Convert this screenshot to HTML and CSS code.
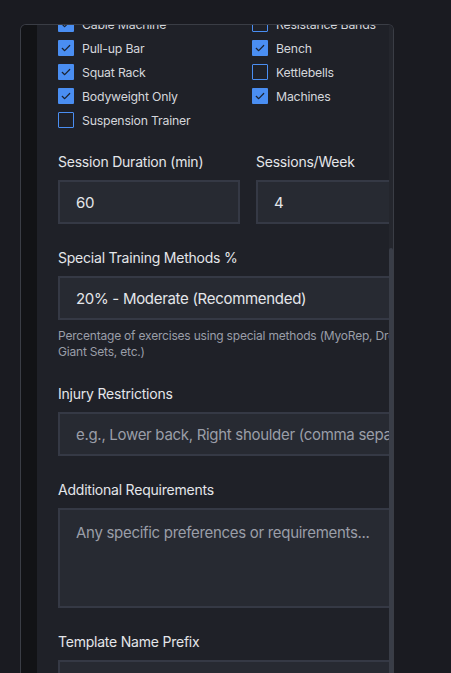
FILE: index.html
```html
<!DOCTYPE html>
<html lang="en">
<head>
<meta charset="utf-8">
<title>Workout Generator Settings</title>
<link rel="stylesheet" href="styles.css">
</head>
<body>
<div class="frame">
  <div class="strip"></div>
  <div class="pane">
    <div class="content">
      <form class="form">
        <div class="checks">
          <label class="check"><span class="box on"><svg viewBox="0 0 16 16"><path d="M4.2 8.3l2.5 2.4 5-5.2"/></svg></span>Cable Machine</label>
          <label class="check"><span class="box"></span>Resistance Bands</label>
          <label class="check"><span class="box on"><svg viewBox="0 0 16 16"><path d="M4.2 8.3l2.5 2.4 5-5.2"/></svg></span>Pull-up Bar</label>
          <label class="check"><span class="box on"><svg viewBox="0 0 16 16"><path d="M4.2 8.3l2.5 2.4 5-5.2"/></svg></span>Bench</label>
          <label class="check"><span class="box on"><svg viewBox="0 0 16 16"><path d="M4.2 8.3l2.5 2.4 5-5.2"/></svg></span>Squat Rack</label>
          <label class="check"><span class="box"></span>Kettlebells</label>
          <label class="check"><span class="box on"><svg viewBox="0 0 16 16"><path d="M4.2 8.3l2.5 2.4 5-5.2"/></svg></span>Bodyweight Only</label>
          <label class="check"><span class="box on"><svg viewBox="0 0 16 16"><path d="M4.2 8.3l2.5 2.4 5-5.2"/></svg></span>Machines</label>
          <label class="check"><span class="box"></span>Suspension Trainer</label>
        </div>

        <div class="pair">
          <div class="field">
            <div class="label">Session Duration (min)</div>
            <input class="input" type="text" value="60">
          </div>
          <div class="field">
            <div class="label">Sessions/Week</div>
            <input class="input" type="text" value="4">
          </div>
        </div>

        <div class="field">
          <div class="label">Special Training Methods %</div>
          <select class="input select">
            <option>20% - Moderate (Recommended)</option>
          </select>
          <p class="help">Percentage of exercises using special methods (MyoRep, Drop Sets, Giant Sets, etc.)</p>
        </div>

        <div class="field">
          <div class="label">Injury Restrictions</div>
          <input class="input" type="text" placeholder="e.g., Lower back, Right shoulder (comma separated)">
        </div>

        <div class="field">
          <div class="label">Additional Requirements</div>
          <textarea class="input area" placeholder="Any specific preferences or requirements..."></textarea>
        </div>

        <div class="field">
          <div class="label">Template Name Prefix</div>
          <input class="input" type="text">
        </div>
      </form>
    </div>
    <div class="scrollbar"><div class="thumb"></div></div>
  </div>
</div>
</body>
</html>
```

FILE: styles.css
```css
html, body {
  margin: 0;
  padding: 0;
}
body {
  background: #1a1b21;
  width: 451px;
  height: 673px;
  overflow: hidden;
  font-family: Inter, "Noto Sans", "Liberation Sans", sans-serif;
}
.frame {
  margin: 24px 0 0 20px;
  width: 372px;
  height: 660px;
  border: 1px solid #3a3d45;
  border-bottom: none;
  border-radius: 6px 6px 0 0;
  display: flex;
  overflow: hidden;
}
.strip {
  width: 16px;
  flex: none;
  background: #121316;
}
.pane {
  flex: 1;
  display: flex;
  background: #1f2128;
  min-width: 0;
}
.content {
  flex: 1;
  min-width: 0;
  overflow: hidden;
  padding-left: 21px;
}
.form {
  width: 380px;
  margin-top: -9px;
  display: flex;
  flex-direction: column;
  gap: 24px;
}
.checks {
  display: grid;
  grid-template-columns: 186px 186px;
  column-gap: 8px;
  row-gap: 8px;
}
.check {
  display: flex;
  align-items: center;
  gap: 8px;
  height: 16px;
  font-size: 12.3px;
  letter-spacing: -0.2px;
  color: #d4d6db;
  white-space: nowrap;
}
.box {
  width: 16px;
  height: 16px;
  box-sizing: border-box;
  border: 1.5px solid #4a8ef2;
  border-radius: 1px;
  background: #1f2128;
  flex: none;
  display: flex;
}
.box.on {
  background: #4a8ef2;
  border: none;
}
.box svg {
  width: 16px;
  height: 16px;
  fill: none;
  stroke: #1b2330;
  stroke-width: 1.2;
  stroke-linecap: round;
  stroke-linejoin: round;
}
.pair {
  display: grid;
  grid-template-columns: 182px 182px;
  column-gap: 16px;
}
.field {
  display: flex;
  flex-direction: column;
}
.label {
  font-size: 14px;
  line-height: 20px;
  letter-spacing: -0.22px;
  color: #e4e6ea;
  margin-bottom: 8px;
}
.input {
  appearance: none;
  -webkit-appearance: none;
  box-sizing: border-box;
  width: 100%;
  height: 44px;
  margin: 0;
  padding: 0 16px;
  border: 2px solid #353945;
  border-radius: 0;
  background: #272a32;
  color: #e4e6ea;
  font-family: inherit;
  font-size: 15px;
  letter-spacing: -0.3px;
  outline: none;
}
.input::placeholder {
  color: #9a9ea8;
}
.area {
  height: 100px;
  padding: 13px 16px;
  line-height: 20px;
  resize: none;
}
.help {
  margin: 8px 0 0;
  font-size: 12px;
  line-height: 16px;
  letter-spacing: -0.2px;
  color: #9a9ea8;
}
.scrollbar {
  width: 4px;
  flex: none;
  background: #24262d;
}
.thumb {
  margin-top: 223px;
  height: 600px;
  background: #393d47;
  border-radius: 2px 2px 0 0;
}
```
